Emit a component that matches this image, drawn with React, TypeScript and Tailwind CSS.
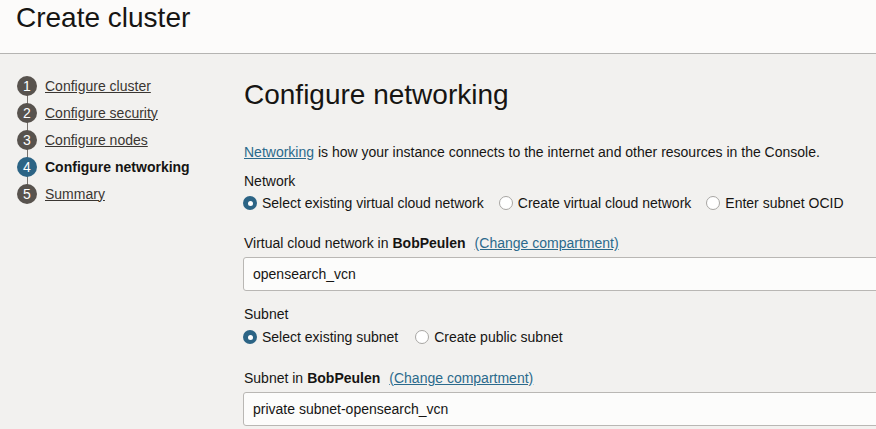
import React from "react";

const steps = [
  { n: 1, label: "Configure cluster" },
  { n: 2, label: "Configure security" },
  { n: 3, label: "Configure nodes" },
  { n: 4, label: "Configure networking", active: true },
  { n: 5, label: "Summary" },
];

function Radio({ label, checked }: { label: string; checked?: boolean }) {
  return (
    <label className="flex items-center gap-[5px] h-5">
      {checked ? (
        <span className="w-[14px] h-[14px] rounded-full bg-[#2c6485] flex items-center justify-center">
          <span className="w-[5px] h-[5px] rounded-full bg-white" />
        </span>
      ) : (
        <span className="w-[14px] h-[14px] rounded-full bg-white border border-[#a8a6a3]" />
      )}
      <span>{label}</span>
    </label>
  );
}

function Field({ label, value }: { label: string; value: string }) {
  return (
    <div>
      <div className="h-5 leading-5 flex items-center">
        <span>{label}</span>
        <span className="font-bold ml-1">BobPeulen</span>
        <a className="ml-[9px] text-[#2b6a8c] underline">(Change compartment)</a>
      </div>
      <div className="mt-1 w-[680px] h-[34px] -ml-px border border-[#b9b7b4] rounded-[3px] bg-[#fcfcfb] flex items-center pl-[9px]">
        {value}
      </div>
    </div>
  );
}

export default function App() {
  return (
    <div
      className="w-[876px] h-[429px] overflow-hidden bg-[#f2f1ef] text-[#161513] text-[14px] leading-5"
      style={{ fontFamily: '"Liberation Sans", Arial, sans-serif' }}
    >
      {/* Header */}
      <header className="h-[54px] bg-[#fcfbfa] border-b border-[#b5b4b2] pl-4 pt-[2px]">
        <h1 className="text-[28px] leading-8">Create cluster</h1>
      </header>

      <div className="flex">
        {/* Steps */}
        <nav className="w-[244px] pl-[17px] pt-[18px] shrink-0">
          {steps.map((s, i) => (
            <div key={s.n} className="relative flex items-center h-[27px]">
              {i < steps.length - 1 && (
                <span className="absolute left-[9.5px] top-[18px] h-[18px] w-px bg-[#77726d]" />
              )}
              <span
                className={`relative w-5 h-5 rounded-full flex items-center justify-center text-white text-[14px] ${
                  s.active ? "bg-[#2c6485]" : "bg-[#58534e]"
                }`}
              >
                {s.n}
              </span>
              {s.active ? (
                <span className="ml-2 font-bold text-[#161513]">{s.label}</span>
              ) : (
                <a className="ml-2 underline text-[#3a3632]">{s.label}</a>
              )}
            </div>
          ))}
        </nav>

        {/* Main */}
        <main className="pt-[25px]">
          <h2 className="text-[28px] leading-8">Configure networking</h2>

          <p className="mt-[31px]">
            <a className="text-[#2b6a8c] underline">Networking</a> is how your instance connects to the
            internet and other resources in the Console.
          </p>

          <div className="mt-[9px]">Network</div>
          <div className="mt-[2px] flex gap-[15px] -ml-px">
            <Radio label="Select existing virtual cloud network" checked />
            <Radio label="Create virtual cloud network" />
            <Radio label="Enter subnet OCID" />
          </div>

          <div className="mt-5">
            <Field label="Virtual cloud network in" value="opensearch_vcn" />
          </div>

          <div className="mt-[13px]">Subnet</div>
          <div className="mt-[3px] flex gap-[17px] -ml-px">
            <Radio label="Select existing subnet" checked />
            <Radio label="Create public subnet" />
          </div>

          <div className="mt-[21px]">
            <Field label="Subnet in" value="private subnet-opensearch_vcn" />
          </div>
        </main>
      </div>
    </div>
  );
}
